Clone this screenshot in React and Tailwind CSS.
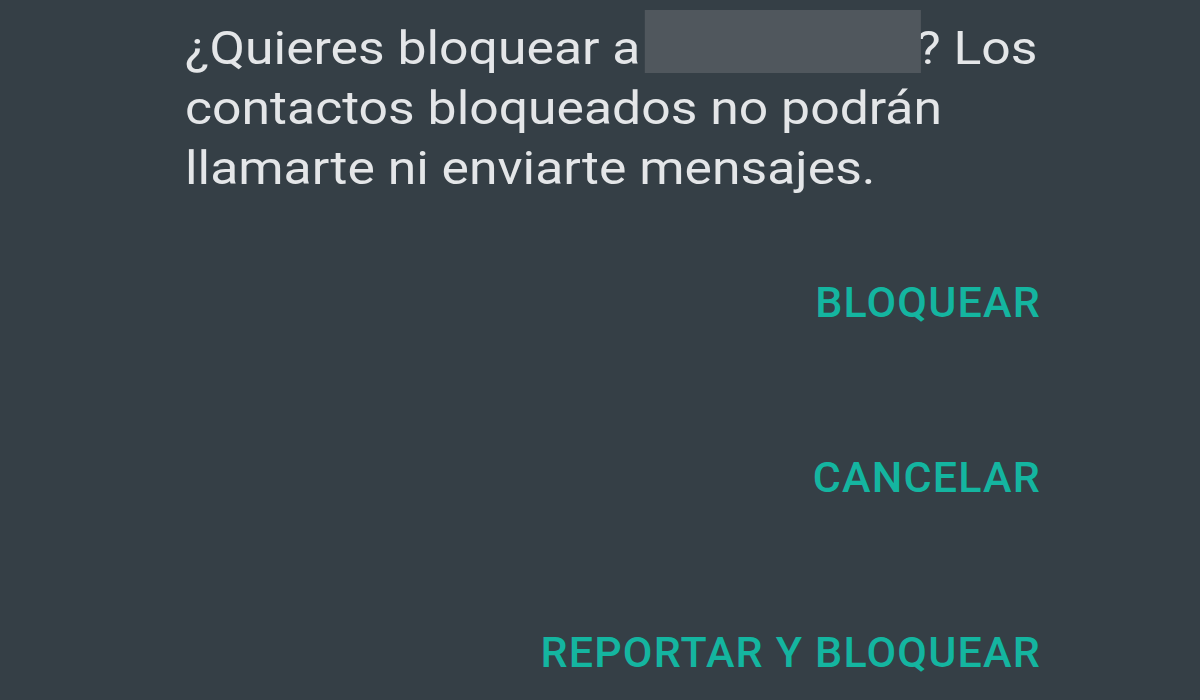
export default function App() {
  return (
    <div className="w-[1200px] h-[700px] overflow-hidden bg-[#353f46] font-['Roboto',sans-serif]">
      <div className="pl-[185px] pt-[18px] flex flex-col">
        <p className="text-[47px] leading-[60px] text-[#e4e6e8] whitespace-nowrap origin-left scale-x-[1.1]">
          ¿Quieres bloquear a{" "}
          <span className="relative inline-block w-[251px] h-[10px] -ml-[8px] -mr-[4px]">
            <span className="absolute left-0 right-0 -top-[44px] h-[63px] bg-[#50575d]"></span>
          </span>
          ? Los
          <br />
          contactos bloqueados no podrán
          <br />
          llamarte ni enviarte mensajes.
        </p>
        <div className="flex flex-col items-end w-[856px] text-[43px] leading-[44px] font-medium text-[#14b5a0] tracking-[1.2px]">
          <span className="mt-[82px]">BLOQUEAR</span>
          <span className="mt-[131px]">CANCELAR</span>
          <span className="mt-[131px]">REPORTAR Y BLOQUEAR</span>
        </div>
      </div>
    </div>
  );
}
